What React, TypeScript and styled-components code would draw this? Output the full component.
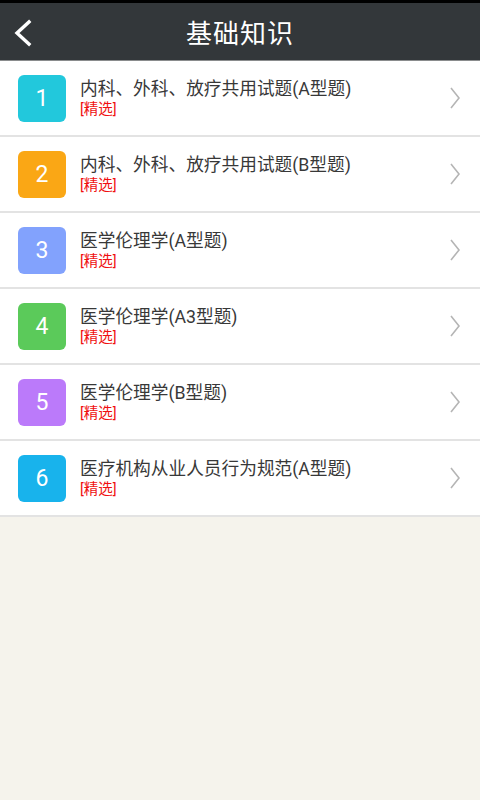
import React from "react";
import styled, { createGlobalStyle } from "styled-components";

const GlobalStyle = createGlobalStyle`
    html, body {
        margin: 0;
        padding: 0;
        background: #f5f3ec;
        font-family: Roboto, "Noto Sans CJK SC", sans-serif;
    }
`;

const items = [
    { title: "内科、外科、放疗共用试题(A型题)", color: "#22c8dc" },
    { title: "内科、外科、放疗共用试题(B型题)", color: "#faa715" },
    { title: "医学伦理学(A型题)", color: "#82a2fd" },
    { title: "医学伦理学(A3型题)", color: "#5bca5a" },
    { title: "医学伦理学(B型题)", color: "#bb7afa" },
    { title: "医疗机构从业人员行为规范(A型题)", color: "#18b3ec" },
];

export default function App() {
    return (
        <Page>
            <GlobalStyle />
            <StatusStrip />
            <Header>
                <BackButton aria-label="back">
                    <svg width="20" height="28" viewBox="0 0 20 28">
                        <path d="M16 3 L4 14 L16 25" fill="none" stroke="#fff" strokeWidth="3.4" strokeLinecap="square" />
                    </svg>
                </BackButton>
                <Title>基础知识</Title>
            </Header>
            <List>
                {items.map((item, i) => (
                    <Row key={i}>
                        <Badge color={item.color}>{i + 1}</Badge>
                        <Texts>
                            <ItemTitle>{item.title}</ItemTitle>
                            <Tag>[精选]</Tag>
                        </Texts>
                        <svg width="12" height="22" viewBox="0 0 12 22">
                            <path d="M2 1 L10 11 L2 21" fill="none" stroke="#b5b5b5" strokeWidth="1.6" />
                        </svg>
                    </Row>
                ))}
            </List>
        </Page>
    );
}

const Page = styled.div`
    width: 480px;
    min-height: 800px;
    background: #f5f3ec;
`;

const StatusStrip = styled.div`
    height: 3px;
    background: #000;
`;

const Header = styled.div`
    position: relative;
    height: 57px;
    background: #33373a;
    border-bottom: 1px solid #8a8c8d;
    display: flex;
    align-items: center;
    justify-content: center;
`;

const BackButton = styled.div`
    position: absolute;
    left: 13px;
    top: 16px;
    display: flex;
`;

const Title = styled.div`
    color: #fff;
    font-size: 26px;
    letter-spacing: 1px;
    font-family: "Noto Sans CJK SC", sans-serif;
`;

const List = styled.div`
    background: #fff;
`;

const Row = styled.div`
    height: 74px;
    border-bottom: 2px solid #e3e3e3;
    display: flex;
    align-items: center;
    padding: 0 19px 0 18px;
`;

const Badge = styled.div<{ color: string }>`
    width: 48px;
    height: 47px;
    border-radius: 6px;
    background: ${({ color }) => color};
    color: #fff;
    font-family: Roboto, sans-serif;
    font-size: 23px;
    display: flex;
    align-items: center;
    justify-content: center;
    flex-shrink: 0;
`;

const Texts = styled.div`
    flex: 1;
    display: flex;
    flex-direction: column;
    margin-left: 14px;
    margin-top: -1px;
`;

const ItemTitle = styled.div`
    font-size: 17.7px;
    line-height: 24px;
    color: #383838;
    font-family: Roboto, "Noto Sans CJK SC", sans-serif;
`;

const Tag = styled.div`
    font-size: 14.5px;
    line-height: 18px;
    color: #f01010;
    font-family: Roboto, "Noto Sans CJK SC", sans-serif;
`;
